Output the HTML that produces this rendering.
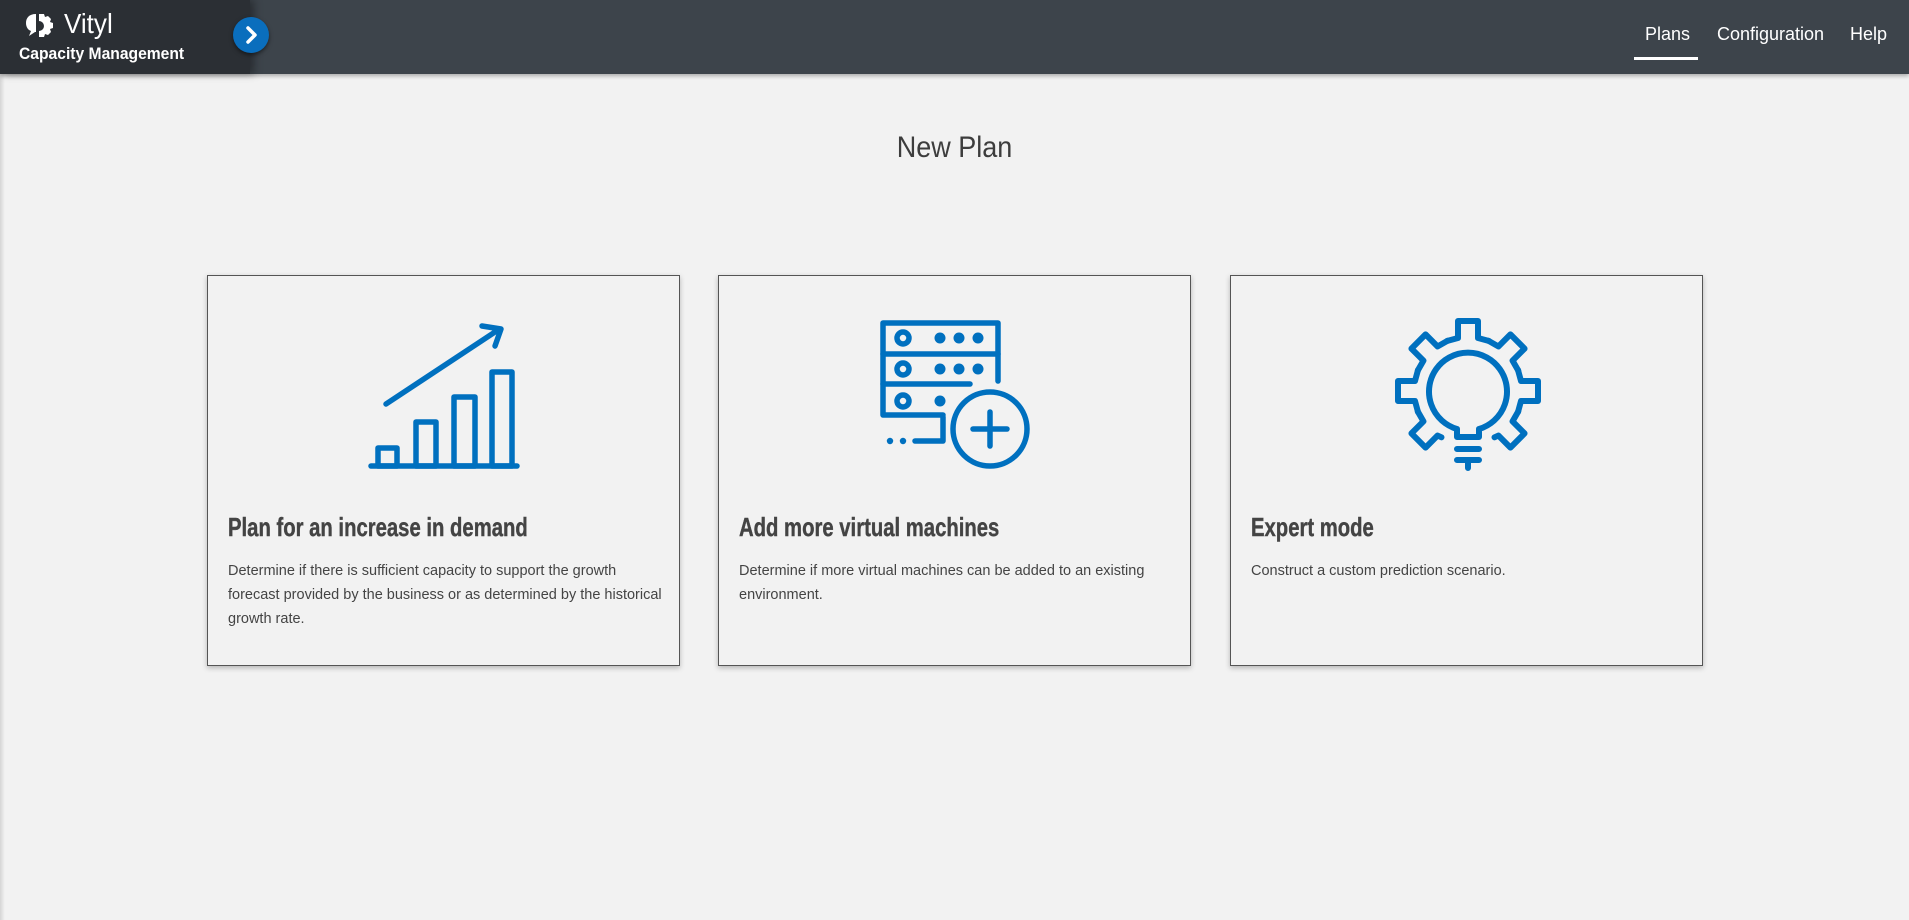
<!DOCTYPE html>
<html><head><meta charset="utf-8"><style>
*{margin:0;padding:0;box-sizing:border-box}
body{width:1909px;height:920px;background:#f2f2f2;font-family:"Liberation Sans",sans-serif;position:relative;overflow:hidden}
.hdr{position:absolute;left:0;top:0;width:1909px;height:74px;background:#3d444b;box-shadow:0 2px 4px rgba(0,0,0,.3)}
.brand{position:absolute;left:0;top:0;width:250px;height:74px;background:#2b2f34;box-shadow:4px 0 8px rgba(0,0,0,.35)}
.btn{position:absolute;left:233px;top:17px;width:36px;height:36px;border-radius:50%;background:#0a6ebd;box-shadow:0 2px 4px rgba(0,0,0,.5)}
.nav{position:absolute;top:24px;color:#fff;font-size:18px}
.ul{position:absolute;left:1634px;top:57px;width:64px;height:3px;background:#fff}
.edge{position:absolute;left:0;top:74px;width:5px;height:846px;background:linear-gradient(90deg,rgba(0,0,0,.12),rgba(0,0,0,0))}
h1{position:absolute;left:0;width:1909px;top:131px;text-align:center;font-weight:normal;font-size:30px;color:#3d3d3d;transform:scaleX(.9)}
.card{position:absolute;top:275px;width:473px;height:391px;border:1px solid #555;box-shadow:0 2px 5px rgba(0,0,0,.25);background:#f2f2f2}
.card h2{position:absolute;left:20px;top:236px;font-size:26px;color:#444;font-weight:bold;white-space:nowrap;transform:scaleX(.78);transform-origin:left;-webkit-text-stroke:.4px #444}
.card p{position:absolute;left:20px;top:283px;font-size:14.5px;line-height:24px;color:#444;white-space:nowrap}
svg{position:absolute}
</style></head><body>
<div class="hdr">
 <div class="brand">
  <svg style="left:24px;top:12px" width="34" height="26" viewBox="0 0 34 26"><path d="M12 2C5 2 2 6 2 11c0 4 2 7 5 8l-2 5 6-4h1z" fill="#fff"/><path d="M15 2h5l1 3 3-1 3 3-1 3 3 1v5l-3 1 1 3-3 3-3-1-1 3h-5v-6a5 5 0 0 0 0-10z" fill="#fff"/></svg>
  <div style="position:absolute;left:64px;top:8px;color:#fff;font-size:28px;transform:scaleX(.93);transform-origin:left">Vityl</div>
  <div style="position:absolute;left:19px;top:44px;color:#fff;font-size:17px;font-weight:bold;transform:scaleX(.92);transform-origin:left;white-space:nowrap">Capacity Management</div>
 </div>
 <div class="btn"><svg style="left:0;top:0" width="36" height="36"><path d="M15 11l7 7-7 7" stroke="#fff" stroke-width="3.5" fill="none" stroke-linecap="round" stroke-linejoin="round"/></svg></div>
 <div class="nav" style="left:1645px">Plans</div>
 <div class="nav" style="left:1717px">Configuration</div>
 <div class="nav" style="left:1850px">Help</div>
 <div class="ul"></div>
</div>
<div class="edge"></div>
<h1>New Plan</h1>

<div class="card" style="left:207px">
 <svg style="left:158px;top:40px" width="160" height="160" viewBox="365 315 160 160" fill="none" stroke="#0070bf" stroke-width="5.5" stroke-linecap="round" stroke-linejoin="round">
  <path d="M370 465H516"/>
  <rect x="377" y="447" width="19" height="18"/><rect x="415" y="421" width="20" height="44"/><rect x="453" y="396" width="21" height="69"/><rect x="491" y="371" width="20" height="94"/>
  <path d="M385 403L497 329"/><path d="M481 325L500 328L494 345"/>
 </svg>
 <h2>Plan for an increase in demand</h2>
 <p>Determine if there is sufficient capacity to support the growth<br>forecast provided by the business or as determined by the historical<br>growth rate.</p>
</div>

<div class="card" style="left:718px">
 <svg style="left:152px;top:35px" width="170" height="170" viewBox="870 310 170 170" fill="none" stroke="#0070bf" stroke-width="5.5" stroke-linecap="round" stroke-linejoin="round">
  <path d="M997 380V322H882V414H942"/><path d="M882 353H997"/><path d="M882 383H969"/>
  <path d="M942 416V440H914"/>
  <circle cx="902" cy="337" r="6"/><circle cx="902" cy="368" r="6"/><circle cx="902" cy="400" r="6"/>
  <g fill="#0070bf" stroke="none"><circle cx="939" cy="337" r="5.5"/><circle cx="958" cy="337" r="5.5"/><circle cx="977" cy="337" r="5.5"/><circle cx="939" cy="368" r="5.5"/><circle cx="958" cy="368" r="5.5"/><circle cx="977" cy="368" r="5.5"/><circle cx="939" cy="400" r="5.5"/><circle cx="889" cy="440" r="3.2"/><circle cx="902" cy="440" r="3.2"/></g>
  <circle cx="989" cy="428" r="37"/><path d="M989 411V445M972 428H1006"/>
 </svg>
 <h2>Add more virtual machines</h2>
 <p>Determine if more virtual machines can be added to an existing<br>environment.</p>
</div>

<div class="card" style="left:1230px">
 <svg style="left:150px;top:35px" width="170" height="170" viewBox="0 0 170 170" fill="none" stroke="#0070bf" stroke-width="6" stroke-linecap="round" stroke-linejoin="round">
  <g transform="translate(87 80)">
   <g id="t"><path d="M-21 -50L-10 -53V-70H10V-53L21 -50"/></g>
   <use href="#t" transform="rotate(45)"/><use href="#t" transform="rotate(90)"/><use href="#t" transform="rotate(270)"/><use href="#t" transform="rotate(315)"/>
   <path d="M-21 -50L-10 -53V-70H10V-53L14 -51.5" transform="rotate(135)"/>
   <path d="M-14 -51.5L-10 -53V-70H10V-53L21 -50" transform="rotate(225)"/>
  </g>
  <path d="M76 126V118A39 39 0 1 1 98 118V126Z"/>
  <path d="M76 138H98M76 149H98M87 149V157"/>
 </svg>
 <h2>Expert mode</h2>
 <p>Construct a custom prediction scenario.</p>
</div>
</body></html>
